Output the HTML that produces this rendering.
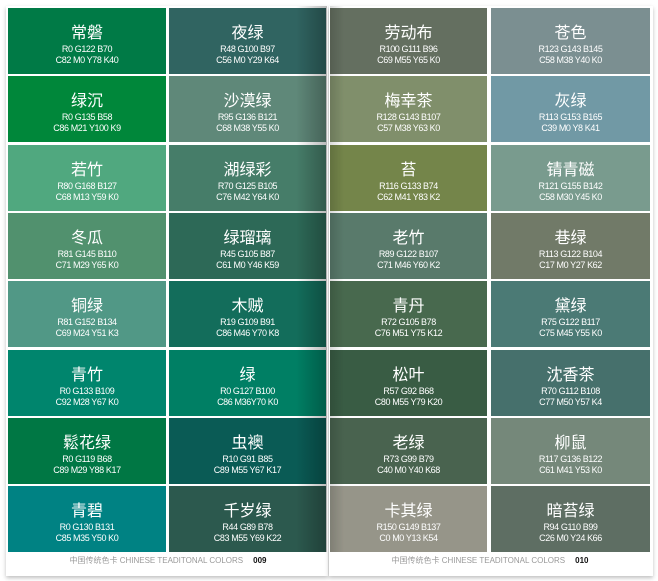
<!DOCTYPE html>
<html><head><meta charset="utf-8"><style>
body{margin:0;width:658px;height:581px;background:#fff;position:relative;overflow:hidden;font-family:"Liberation Sans","Noto Sans CJK SC",sans-serif}
.page{position:absolute;top:6px;height:570px;background:#fff;box-shadow:0 2px 4px rgba(0,0,0,.25)}
.c{position:absolute;height:66px;color:#fff;text-align:center;overflow:hidden}
.c b{display:block;font-weight:normal;font-size:16px;line-height:18px;margin-top:14px;font-family:"Noto Sans CJK SC",sans-serif}
.c i{display:block;font-style:normal;font-size:9px;line-height:10.5px;letter-spacing:-0.4px;margin-top:4px}
.c i+i{margin-top:0}
.ft{position:absolute;top:555px;font-size:8px;color:#999;width:320px;text-align:center}
.ft span{color:#111;font-weight:bold;margin-left:10px}
.sh{position:absolute;top:6px;height:546px;pointer-events:none}
</style></head><body>
<div class="page" style="left:6px;width:322px"></div>
<div class="page" style="left:329px;width:324px"></div>
<div id="g"></div>
<div class="sh" style="left:296px;width:31px;background:linear-gradient(90deg,rgba(0,0,0,0),rgba(0,0,0,.28))"></div>
<div class="sh" style="left:330px;width:14px;background:linear-gradient(90deg,rgba(0,0,0,.15),rgba(0,0,0,0))"></div>
<div class="ft" style="left:8px">中国传统色卡 CHINESE TEADITONAL COLORS<span>009</span></div>
<div class="ft" style="left:330px">中国传统色卡 CHINESE TEADITONAL COLORS<span>010</span></div>
<script>
var d=[
["常磐","R0 G122 B70","C82 M0 Y78 K40","夜绿","R48 G100 B97","C56 M0 Y29 K64","劳动布","R100 G111 B96","C69 M55 Y65 K0","苍色","R123 G143 B145","C58 M38 Y40 K0"],
["绿沉","R0 G135 B58","C86 M21 Y100 K9","沙漠绿","R95 G136 B121","C68 M38 Y55 K0","梅幸茶","R128 G143 B107","C57 M38 Y63 K0","灰绿","R113 G153 B165","C39 M0 Y8 K41"],
["若竹","R80 G168 B127","C68 M13 Y59 K0","湖绿彩","R70 G125 B105","C76 M42 Y64 K0","苔","R116 G133 B74","C62 M41 Y83 K2","锖青磁","R121 G155 B142","C58 M30 Y45 K0"],
["冬瓜","R81 G145 B110","C71 M29 Y65 K0","绿瑠璃","R45 G105 B87","C61 M0 Y46 K59","老竹","R89 G122 B107","C71 M46 Y60 K2","巷绿","R113 G122 B104","C17 M0 Y27 K62"],
["铜绿","R81 G152 B134","C69 M24 Y51 K3","木贼","R19 G109 B91","C86 M46 Y70 K8","青丹","R72 G105 B78","C76 M51 Y75 K12","黛绿","R75 G122 B117","C75 M45 Y55 K0"],
["青竹","R0 G133 B109","C92 M28 Y67 K0","绿","R0 G127 B100","C86 M36Y70 K0","松叶","R57 G92 B68","C80 M55 Y79 K20","沈香茶","R70 G112 B108","C77 M50 Y57 K4"],
["鬆花绿","R0 G119 B68","C89 M29 Y88 K17","虫襖","R10 G91 B85","C89 M55 Y67 K17","老绿","R73 G99 B79","C40 M0 Y40 K68","柳鼠","R117 G136 B122","C61 M41 Y53 K0"],
["青碧","R0 G130 B131","C85 M35 Y50 K0","千岁绿","R44 G89 B78","C83 M55 Y69 K22","卡其绿","R150 G149 B137","C0 M0 Y13 K54","暗苔绿","R94 G110 B99","C26 M0 Y24 K66"]];
var xs=[[8,158],[169,157],[330,157],[491,159]],h="";
for(var r=0;r<8;r++){var y=Math.round(8+r*68.3);for(var c=0;c<4;c++){var n=d[r][c*3],a=d[r][c*3+1],b=d[r][c*3+2];var m=a.match(/\d+/g);
h+='<div class="c" style="left:'+xs[c][0]+'px;width:'+xs[c][1]+'px;top:'+y+'px;background:rgb('+m[0]+','+m[1]+','+m[2]+')"><b>'+n+'</b><i>'+a+'</i><i>'+b+'</i></div>';}}
document.getElementById("g").innerHTML=h;
</script>
</body></html>
